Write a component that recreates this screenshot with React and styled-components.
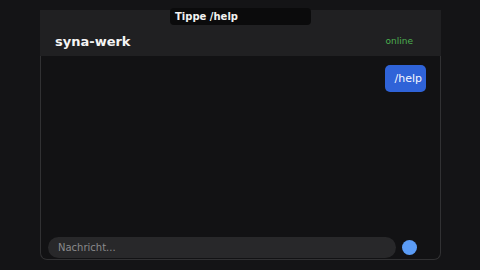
import styled, { createGlobalStyle } from "styled-components";

const GlobalStyle = createGlobalStyle`
    html, body {
        margin: 0;
        padding: 0;
        background: #141416;
        font-family: "DejaVu Sans", sans-serif;
    }
`;

const Page = styled.div`
    position: relative;
    width: 480px;
    height: 270px;
    padding: 10px 0 0 40px;
    box-sizing: border-box;
`;

const Tooltip = styled.div`
    position: absolute;
    left: 170px;
    top: 8px;
    width: 141px;
    height: 17px;
    box-sizing: border-box;
    padding: 2px 5px;
    background: #0b0b0c;
    border-radius: 4px;
    color: #f2f2f2;
    font-size: 10px;
    font-weight: bold;
    line-height: 13px;
    z-index: 2;
`;

const Panel = styled.div`
    width: 401px;
    height: 250px;
    box-sizing: border-box;
    display: flex;
    flex-direction: column;
    background: #121214;
    border: 1px solid #313133;
    border-top: none;
    border-radius: 0 0 7px 7px;
`;

const Header = styled.div`
    height: 46px;
    margin: 0 -1px;
    box-sizing: border-box;
    padding: 16px 28px 0 15px;
    display: flex;
    align-items: center;
    justify-content: space-between;
    background: #202022;
`;

const Title = styled.span`
    color: #f4f4f4;
    font-size: 13px;
    font-weight: bold;
`;

const Status = styled.span`
    color: #4caf50;
    font-size: 9px;
`;

const Messages = styled.div`
    flex: 1;
    display: flex;
    flex-direction: column;
    align-items: flex-end;
    padding: 9px 14px 0 0;
`;

const Bubble = styled.div`
    background: #2f63d8;
    color: #f5f7ff;
    font-size: 11px;
    line-height: 27px;
    height: 27px;
    padding: 0 4px 0 10px;
    border-radius: 5px;
`;

const InputRow = styled.div`
    display: flex;
    align-items: center;
    gap: 6px;
    padding: 0 0 1px 7px;
`;

const Input = styled.div`
    width: 348px;
    height: 21px;
    box-sizing: border-box;
    padding-left: 10px;
    display: flex;
    align-items: center;
    background: #28282a;
    border-radius: 11px;
    color: #8a8a8c;
    font-size: 10px;
`;

const SendDot = styled.div`
    width: 15px;
    height: 15px;
    border-radius: 50%;
    background: #5b9cf6;
`;

export default function App() {
    return (
        <>
            <GlobalStyle />
            <Page>
                <Tooltip>Tippe /help</Tooltip>
                <Panel>
                    <Header>
                        <Title>syna-werk</Title>
                        <Status>online</Status>
                    </Header>
                    <Messages>
                        <Bubble>/help</Bubble>
                    </Messages>
                    <InputRow>
                        <Input>Nachricht...</Input>
                        <SendDot />
                    </InputRow>
                </Panel>
            </Page>
        </>
    );
}
